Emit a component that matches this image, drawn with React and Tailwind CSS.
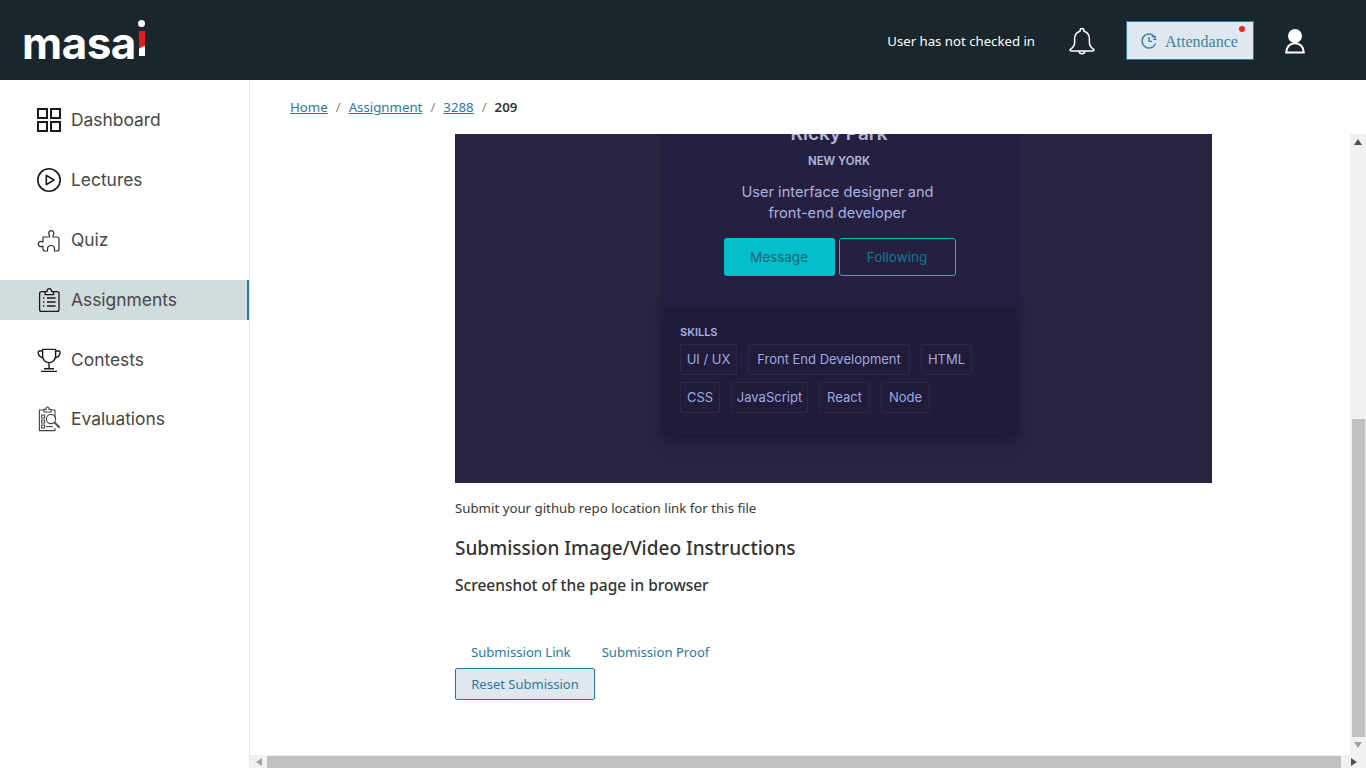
const SIDE_FONT = "font-['Inter','Liberation_Sans',sans-serif]"
const BODY_FONT = "font-['Noto_Sans','Open_Sans',sans-serif]"
const SHOT_FONT = "font-['Inter','Liberation_Sans',sans-serif]"

function DashboardIcon() {
  return (
    <svg width="26" height="26" viewBox="0 0 26 26" fill="none" stroke="#1a1a1a" strokeWidth="2">
      <rect x="2" y="2" width="9" height="9" />
      <rect x="15" y="2" width="9" height="9" />
      <rect x="2" y="15" width="9" height="9" />
      <rect x="15" y="15" width="9" height="9" />
    </svg>
  )
}

function LecturesIcon() {
  return (
    <svg width="26" height="26" viewBox="0 0 26 26" fill="none" stroke="#1a1a1a" strokeWidth="1.6" strokeLinejoin="round">
      <circle cx="13" cy="13" r="11.2" />
      <path d="M10.3 8.4 L18 13 L10.3 17.6 Z" />
    </svg>
  )
}

function QuizIcon() {
  return (
    <svg width="26" height="26" viewBox="0 0 26 26" fill="none" stroke="#333" strokeWidth="1.2" strokeLinejoin="round">
      <path d="M7 10 H13.5 V8.2 A2.6 2.6 0 1 1 17 8.2 V10 H21 Q23 10 23 12 V22 Q23 24 21 24 H18.5 V22 A3.3 3.3 0 1 0 11.5 22 V24 H9 Q7 24 7 22 V19 H6.6 A2.6 2.6 0 1 1 6.6 15 H7 Z" />
    </svg>
  )
}

function AssignmentsIcon() {
  return (
    <svg width="26" height="26" viewBox="0 0 26 26" fill="none" stroke="#1a1a1a" strokeWidth="1.3" strokeLinejoin="round">
      <path d="M9 4.6 H5.6 C4.4 4.6 3.6 5.4 3.6 6.6 V22.4 C3.6 23.6 4.4 24.4 5.6 24.4 H21 C22.2 24.4 23 23.6 23 22.4 V6.6 C23 5.4 22.2 4.6 21 4.6 H17.6" />
      <path d="M9 7.6 V4.6 H11 C11 2.4 12 1.6 13.3 1.6 C14.6 1.6 15.6 2.4 15.6 4.6 H17.6 V7.6 Z" />
      <path d="M7 11 H8.4 M11 11 H19.6 M7 15 H8.4 M11 15 H19.6 M7 19 H8.4 M11 19 H19.6" />
    </svg>
  )
}

function ContestsIcon() {
  return (
    <svg width="26" height="26" viewBox="0 0 26 26" fill="none" stroke="#1a1a1a" strokeWidth="1.4" strokeLinejoin="round">
      <path d="M6.6 2.4 H19.6 V9 C19.6 13 16.6 15.6 13 15.6 C9.4 15.6 6.6 13 6.6 9 Z" />
      <path d="M6.6 4 H3.6 C2.4 4 2 5 2.2 6.2 C2.6 8.6 4.6 10.4 7 11" />
      <path d="M19.6 4 H22.6 C23.8 4 24.2 5 24 6.2 C23.6 8.6 21.6 10.4 19.2 11" />
      <path d="M13 15.6 V21.6 M8 21.8 H18 M5 24.4 H21" />
    </svg>
  )
}

function EvaluationsIcon() {
  return (
    <svg width="26" height="26" viewBox="0 0 26 26" fill="none" stroke="#444" strokeWidth="1.1" strokeLinejoin="round">
      <path d="M8 4 H3.4 V24.6 H19 V22" />
      <path d="M19 12 V4 H15" />
      <path d="M8 6 V3.4 H10 C10 1.8 10.6 1 11.5 1 C12.4 1 13 1.8 13 3.4 H15 V6 Z" />
      <rect x="5.6" y="9" width="3" height="3" />
      <rect x="5.6" y="14" width="3" height="3" />
      <rect x="5.6" y="19" width="3" height="3" />
      <path d="M10 20.6 H17" />
      <circle cx="15" cy="13" r="4.6" />
      <path d="M18.4 16.4 L23.6 21.6" strokeWidth="2" />
    </svg>
  )
}

function BellIcon() {
  return (
    <svg width="28" height="28" viewBox="0 0 28 28" fill="none" stroke="#fff" strokeWidth="1.5" strokeLinejoin="round">
      <path d="M12 4.2 C12 2.6 12.8 1.6 14 1.6 C15.2 1.6 16 2.6 16 4.2 C19.6 5.4 21.4 8.4 21.4 12 V15.4 C21.4 18.4 23 20.4 25.4 22.2 C26.4 23 26 24 25 24 H3 C2 24 1.6 23 2.6 22.2 C5 20.4 6.6 18.4 6.6 15.4 V12 C6.6 8.4 8.4 5.4 12 4.2 Z" />
      <path d="M11.2 24 C11.2 25.8 12.4 26.8 14 26.8 C15.6 26.8 16.8 25.8 16.8 24" />
    </svg>
  )
}

function ClockIcon() {
  return (
    <svg width="16" height="16" viewBox="0 0 16 16" fill="none" stroke="#3d82a8" strokeWidth="1.4">
      <path d="M14.6 5.4 A7 7 0 1 0 14.6 10.6" />
      <path d="M8 4 V8.4 H11" />
      <path d="M10.6 3.6 H15 M12 6.4 H15.4" strokeWidth="1.1" />
    </svg>
  )
}

function UserIcon() {
  return (
    <svg width="20" height="26" viewBox="0 0 20 26" fill="none">
      <circle cx="10" cy="8" r="7" fill="#fff" />
      <path d="M1.2 24.6 C1.2 19 5 15.2 10 15.2 C15 15.2 18.8 19 18.8 24.6 Z" stroke="#fff" strokeWidth="2" />
    </svg>
  )
}

function Logo() {
  return (
    <div className="flex items-end h-[50px] ml-[22px]">
      <span className="font-['Inter',sans-serif] text-[44px] leading-[44px] font-bold tracking-[-0.5px] text-white">masa</span>
      <div className="ml-[3px] mb-[9px] flex flex-col items-center gap-[4px] w-[6px]">
        <div className="w-[7px] h-[7px] rounded-full bg-white shrink-0" />
        <div className="w-[6px] h-[25px] bg-[linear-gradient(150deg,#e21b23_0%,#e21b23_62%,#ffffff_63%,#ffffff_100%)]" />
      </div>
    </div>
  )
}

function Header() {
  return (
    <header className="h-20 shrink-0 bg-[#1a252c] flex items-center">
      <Logo />
      <div className="ml-auto flex items-center pt-[1px]">
        <span className={`${BODY_FONT} text-[13.2px] text-white mt-[2px]`}>User has not checked in</span>
        <div className="ml-[33px] mt-[1px] flex"><BellIcon /></div>
        <button className="relative ml-[30px] h-[39px] w-[128px] bg-[#dfe8ee] border border-[#2b7a9f] flex items-center pl-[14px] gap-2 font-['Liberation_Serif',serif] text-base text-[#3d82a8]">
          <ClockIcon />
          <span className="pt-[2px]">Attendance</span>
          <span className="absolute right-[8px] top-[4px] h-[6px] w-[6px] rounded-full bg-[#e02a2a]" />
        </button>
        <div className="ml-[31px] mr-[61px] mt-[1px] flex"><UserIcon /></div>
      </div>
    </header>
  )
}

const NAV = [
  { label: 'Dashboard', Icon: DashboardIcon },
  { label: 'Lectures', Icon: LecturesIcon },
  { label: 'Quiz', Icon: QuizIcon },
  { label: 'Assignments', Icon: AssignmentsIcon, active: true },
  { label: 'Contests', Icon: ContestsIcon },
  { label: 'Evaluations', Icon: EvaluationsIcon, last: true },
]

function Sidebar() {
  return (
    <aside className="w-[250px] shrink-0 border-r border-[#e9e9f0] pt-5 flex flex-col gap-5">
      {NAV.map(({ label, Icon, active, last }) => (
        <div
          key={label}
          className={`h-10 flex items-center pl-9 gap-[9px] ${SIDE_FONT} text-[17.4px] text-[#484848] ${
            active ? 'bg-[#d0dcdd] border-r-[2px] border-[#2b7a9f]' : ''
          } ${last ? '-mt-[1px]' : ''}`}
        >
          <Icon />
          {label}
        </div>
      ))}
    </aside>
  )
}

function Breadcrumb() {
  return (
    <nav className={`h-[54px] shrink-0 pl-10 pt-[2px] flex items-center text-[13.25px] ${BODY_FONT}`}>
      <a className="text-[#2b7a9f] underline">Home</a>
      <span className="mx-2 text-[#8a8a8a]">/</span>
      <a className="text-[#2b7a9f] underline">Assignment</a>
      <span className="mx-2 text-[#8a8a8a]">/</span>
      <a className="text-[#2b7a9f] underline">3288</a>
      <span className="mx-2 text-[#8a8a8a]">/</span>
      <span className="font-semibold text-[#333]">209</span>
    </nav>
  )
}

const SKILL_ROWS = [
  [['UI / UX', 'w-[57px]'], ['Front End Development', 'w-[162px]'], ['HTML', 'w-[51px]']],
  [['CSS', 'w-[40px]'], ['JavaScript', 'w-[77px]'], ['React', 'w-[51px]'], ['Node', 'w-[49px]']],
]

// the submitted screenshot of the profile card, scrolled part way
function ProfileShot() {
  return (
    <div className={`h-[349px] w-[757px] overflow-hidden bg-[#2a2340] flex justify-center items-start ${SHOT_FONT}`}>
      <div className="w-[362px] ml-[13px] bg-[#252040] flex flex-col items-center h-[302px]">
        <div className="-mt-[11px] text-[19px] leading-[22px] font-semibold text-[#b3b8dc] mr-[2px]">Ricky Park</div>
        <div className="mt-[8px] text-[11.4px] leading-4 font-semibold text-[#b3b8dc] mr-[2px]">NEW YORK</div>
        <div className="mt-[13px] text-[14.6px] leading-[21px] text-[#a9b2e0] text-center mr-[5px]">
          User interface designer and<br />front-end developer
        </div>
        <div className="mt-[14px] flex gap-[4px] text-[13.5px] mr-[1px]">
          <div className="w-[111px] h-[38px] rounded-[3px] bg-[#03bfcb] text-[#1f5f75] flex items-center justify-center">Message</div>
          <div className="w-[117px] h-[38px] rounded-[3px] border border-[#03bfcb] text-[#0c7a8c] flex items-center justify-center">Following</div>
        </div>
        <div className="mt-[30px] w-[350px] h-[129px] bg-[#201b38] shadow-[0_6px_12px_rgba(20,16,40,0.55)] pl-[15px] pt-[19px]">
          <div className="text-[11px] leading-[14px] font-semibold text-[#a9b2e0]">SKILLS</div>
          <div className="mt-[5px] flex flex-col gap-[7px]">
            {SKILL_ROWS.map((row, i) => (
              <div key={i} className="flex gap-[11px]">
                {row.map(([name, w]) => (
                  <div key={name} className={`${w} h-[31px] border border-[#2c2748] rounded-[2px] flex items-center justify-center text-[13px] text-[#9daae0]`}>
                    {name}
                  </div>
                ))}
              </div>
            ))}
          </div>
        </div>
      </div>
    </div>
  )
}

function ScrollArrow({ d, w = 8, h = 6, fill = '#505050' }) {
  return (
    <svg width={w} height={h} viewBox={`0 0 ${w} ${h}`}><path d={d} fill={fill} /></svg>
  )
}

function VerticalBar() {
  return (
    <div className="w-4 shrink-0 bg-[#f1f1f1] flex flex-col items-center">
      <div className="h-4 w-full flex items-center justify-center"><ScrollArrow d="M4 0 L8 6 H0 Z" /></div>
      <div className="h-[269px] shrink-0" />
      <div className="h-[318px] w-[13px] shrink-0 bg-[#c1c1c1]" />
      <div className="h-[16px] w-full flex items-center justify-center"><ScrollArrow d="M0 0 H8 L4 6 Z" fill="#a3a3a3" /></div>
    </div>
  )
}

function HorizontalBar() {
  return (
    <div className="h-[13px] shrink-0 bg-[#f1f1f1] flex items-center">
      <div className="w-[17px] shrink-0 flex justify-center"><ScrollArrow w={6} h={8} d="M0 4 L6 0 V8 Z" fill="#a3a3a3" /></div>
      <div className="w-[1074px] h-[12px] mt-[1px] shrink-0 bg-[#c1c1c1]" />
      <div className="flex-1 flex justify-center"><ScrollArrow w={6} h={8} d="M0 0 L6 4 L0 8 Z" /></div>
    </div>
  )
}

function Submission() {
  return (
    <div className={`flex-1 min-w-0 pl-[205px] overflow-hidden ${BODY_FONT} text-[#333]`}>
      <ProfileShot />
      <p className="mt-4 text-[13.25px] leading-[18px] text-[#3a3a3a]">Submit your github repo location link for this file</p>
      <h2 className="mt-[17px] text-[19px] leading-[28px] font-medium">Submission Image/Video Instructions</h2>
      <p className="mt-[13px] text-[15.5px] leading-[20px] font-medium">Screenshot of the page in browser</p>
      <div className="mt-[47px] flex text-[13.1px] leading-5 text-[#2b7a9f]">
        <span className="ml-4">Submission Link</span>
        <span className="ml-[31px]">Submission Proof</span>
      </div>
      <button className="mt-[6px] h-8 w-[140px] pt-[1px] rounded-[2px] border border-[#2b7a9f] bg-[#dfe8ee] text-[13px] text-[#2b7a9f]">
        Reset Submission
      </button>
    </div>
  )
}

export default function App() {
  return (
    <div className="h-screen w-full overflow-hidden flex flex-col bg-white">
      <Header />
      <div className="flex-1 min-h-0 flex">
        <Sidebar />
        <main className="flex-1 min-w-0 flex flex-col">
          <Breadcrumb />
          <div className="flex-1 min-h-0 flex">
            <Submission />
            <VerticalBar />
          </div>
          <HorizontalBar />
        </main>
      </div>
    </div>
  )
}
